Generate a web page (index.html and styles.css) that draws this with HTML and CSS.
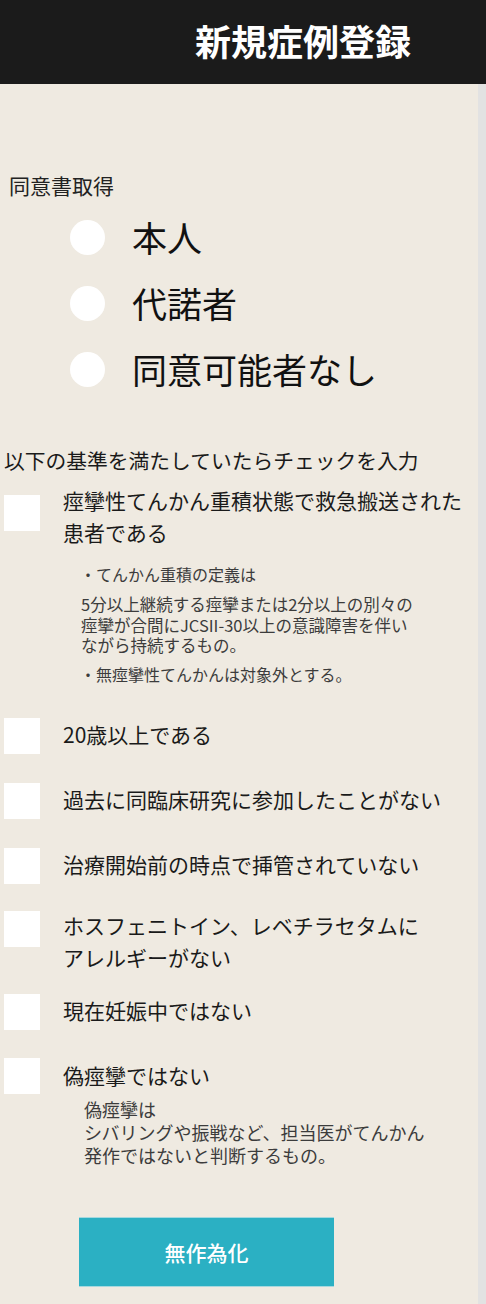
FILE: index.html
```html
<!DOCTYPE html>
<html lang="ja">
<head>
<meta charset="utf-8">
<title>新規症例登録</title>
<link rel="stylesheet" href="styles.css">
</head>
<body>
<header class="topbar">
  <h1 class="title">新規症例登録</h1>
</header>
<div class="page">
  <main class="content">
    <section class="consent">
      <p class="section-label">同意書取得</p>
      <ul class="radios">
        <li class="radio"><span class="radio-dot"></span><span class="radio-label">本人</span></li>
        <li class="radio"><span class="radio-dot"></span><span class="radio-label">代諾者</span></li>
        <li class="radio"><span class="radio-dot"></span><span class="radio-label">同意可能者なし</span></li>
      </ul>
    </section>

    <section class="criteria">
      <p class="criteria-title">以下の基準を満たしていたらチェックを入力</p>

      <div class="crit crit-first">
        <span class="box"></span>
        <span class="crit-text">痙攣性てんかん重積状態で救急搬送された<br>患者である</span>
      </div>
      <div class="notes notes-first">
        <p class="note">・てんかん重積の定義は</p>
        <p class="note-para">5分以上継続する痙攣または2分以上の別々の<br>痙攣が合間にJCSII-30以上の意識障害を伴い<br>ながら持続するもの。</p>
        <p class="note note-last">・無痙攣性てんかんは対象外とする。</p>
      </div>

      <div class="crit">
        <span class="box"></span>
        <span class="crit-text">20歳以上である</span>
      </div>
      <div class="crit">
        <span class="box"></span>
        <span class="crit-text">過去に同臨床研究に参加したことがない</span>
      </div>
      <div class="crit">
        <span class="box"></span>
        <span class="crit-text">治療開始前の時点で挿管されていない</span>
      </div>
      <div class="crit crit-tight">
        <span class="box"></span>
        <span class="crit-text">ホスフェニトイン、レベチラセタムに<br>アレルギーがない</span>
      </div>
      <div class="crit crit-tighter">
        <span class="box"></span>
        <span class="crit-text">現在妊娠中ではない</span>
      </div>
      <div class="crit crit-last">
        <span class="box"></span>
        <span class="crit-text">偽痙攣ではない</span>
      </div>
      <div class="notes notes-last">
        <p class="note-big">偽痙攣は<br>シバリングや振戦など、担当医がてんかん<br>発作ではないと判断するもの。</p>
      </div>
    </section>

    <div class="actions">
      <button class="btn" type="button">無作為化</button>
    </div>
  </main>
  <div class="scrollbar"></div>
</div>
</body>
</html>
```
FILE: styles.css
```css
* { box-sizing: border-box; }

html, body {
  margin: 0;
  padding: 0;
}

body {
  width: 486px;
  min-height: 1304px;
  background: #efeae1;
  color: #111;
  font-family: "Noto Sans CJK JP", "Noto Sans", "Liberation Sans", sans-serif;
}

.topbar {
  height: 84px;
  background: #1b1b1b;
}

.title {
  margin: 0;
  padding-left: 195px;
  font-size: 36px;
  font-weight: 700;
  line-height: 80px;
  color: #fff;
}

.page {
  display: flex;
  min-height: 1220px;
}

.content {
  flex: 1;
  padding-top: 89px;
}

.scrollbar {
  width: 8px;
  background: #e2e2e2;
}

.section-label {
  margin: 0 0 0 9px;
  font-size: 21px;
  line-height: 24px;
  color: #222;
}

.radios {
  list-style: none;
  margin: 7px 0 0;
  padding: 0;
}

.radio {
  display: flex;
  align-items: center;
  height: 66px;
}

.radio-dot {
  width: 35px;
  height: 35px;
  margin-left: 70px;
  border-radius: 50%;
  background: #fff;
}

.radio-label {
  margin-left: 27px;
  font-size: 35px;
  line-height: 40px;
  color: #111;
}

.criteria-title {
  margin: 46px 0 0 4px;
  font-size: 20.75px;
  line-height: 24px;
  color: #1a1a1a;
}

.crit {
  display: flex;
  align-items: flex-start;
  margin-top: 33px;
}

.crit-first { margin-top: 12px; }
.crit-tight { margin-top: 29.5px; }
.crit-tighter { margin-top: 20.5px; }

.box {
  flex: none;
  width: 36px;
  height: 36px;
  margin-left: 4px;
  margin-top: 0;
  margin-bottom: -6px;
  background: #fff;
}

.crit-first .box { margin-top: 11px; }
.crit-tight .box { margin-top: 1.5px; }
.crit-last .box { margin-top: -1px; }

.crit-text {
  margin-left: 23px;
  font-size: 21px;
  line-height: 32px;
  color: #1a1a1a;
}

.notes p { margin: 0; }

.notes-first {
  margin-top: 16px;
  padding-left: 80px;
  font-size: 16px;
  color: #3c3c3c;
}

.note {
  line-height: 21px;
}

.note-para {
  margin-top: 9px !important;
  padding-left: 1px;
  font-size: 16.5px;
  line-height: 20.5px;
}

.note-last {
  margin-top: 8px !important;
}

.notes-last {
  margin-top: 7.5px;
  padding-left: 84px;
}

.note-big {
  font-size: 18px;
  line-height: 23px;
  color: #3c3c3c;
}

.actions {
  margin-top: 49.5px;
  padding-left: 79px;
}

.btn {
  display: block;
  width: 255px;
  height: 70px;
  border: 0;
  border-top: 1px solid #a6d9df;
  border-bottom: 1px solid #a6d9df;
  background: #2bb0c3;
  color: #fff;
  font-family: "Noto Sans CJK JP", "Noto Sans", sans-serif;
  font-size: 21px;
  font-weight: 500;
  padding: 0;
}
```
